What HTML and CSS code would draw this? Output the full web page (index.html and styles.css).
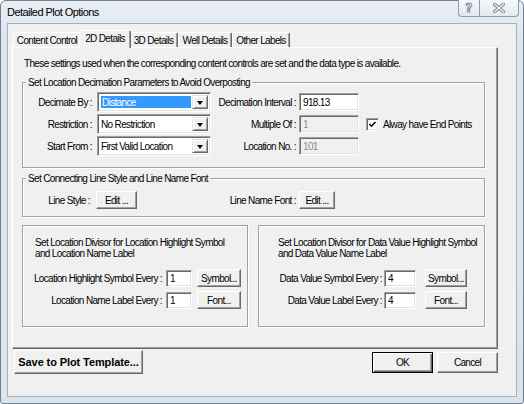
FILE: index.html
```html
<!DOCTYPE html>
<html>
<head>
<meta charset="utf-8">
<title>Detailed Plot Options</title>
<link rel="stylesheet" href="styles.css">
</head>
<body>
<div class="window">
  <div class="titlebar">
    <span class="title">Detailed Plot Options</span>
    <div class="caption-buttons">
      <span class="cap-btn help">?</span>
      <span class="cap-btn close">
        <svg width="12" height="10" viewBox="0 0 12 10"><path d="M1.5 1.2 L10.5 8.8 M10.5 1.2 L1.5 8.8" stroke="#7f8c9a" stroke-width="3.4" stroke-linecap="square"/><path d="M1.5 1.2 L10.5 8.8 M10.5 1.2 L1.5 8.8" stroke="#f3f5f8" stroke-width="1.3" stroke-linecap="square"/></svg>
      </span>
    </div>
  </div>
  <div class="client">
    <div class="tabstrip">
      <span class="tab t1">Content Control</span>
      <span class="tab t2 active">2D Details</span>
      <span class="tab t3">3D Details</span>
      <span class="tab t4">Well Details</span>
      <span class="tab t5">Other Labels</span>
    </div>
    <div class="panel">
      <p class="intro">These settings used when the corresponding content controls are set and the data type is available.</p>

      <fieldset class="group g1">
        <legend>Set Location Decimation Parameters to Avoid Overposting</legend>
        <div class="g1-grid">
          <span class="lbl l1">Decimate By :</span>
          <div class="combo focus"><span class="val"><span class="sel">Distance</span></span><span class="arrow"><i></i></span></div>
          <span class="lbl l3">Decimation Interval :</span>
          <div class="edit">918.13</div>
          <span></span>

          <span class="lbl l1">Restriction :</span>
          <div class="combo"><span class="val">No Restriction</span><span class="arrow"><i></i></span></div>
          <span class="lbl l3">Multiple Of :</span>
          <div class="edit disabled">1</div>
          <label class="check"><span class="box"><svg width="9" height="9" viewBox="0 0 9 9"><path d="M1.5 4 L3.5 6.2 L7.5 2" fill="none" stroke="#000" stroke-width="1.6"/></svg></span>Alway have End Points</label>

          <span class="lbl l1">Start From :</span>
          <div class="combo"><span class="val">First Valid Location</span><span class="arrow"><i></i></span></div>
          <span class="lbl l3">Location No. :</span>
          <div class="edit disabled">101</div>
          <span></span>
        </div>
      </fieldset>

      <fieldset class="group g2">
        <legend>Set Connecting Line Style and Line Name Font</legend>
        <div class="g2-grid">
          <span class="lbl c1">Line Style :</span>
          <button class="btn b-edit1">Edit ...</button>
          <span class="lbl c3">Line Name Font :</span>
          <button class="btn b-edit2">Edit ...</button>
        </div>
      </fieldset>

      <div class="divisors">
        <div class="box g3">
          <p class="note">Set Location Divisor for Location Highlight Symbol<br>and Location Name Label</p>
          <div class="g3-grid">
            <span class="lbl">Location Highlight Symbol Every :</span>
            <div class="edit small">1</div>
            <button class="btn small-btn">Symbol...</button>
            <span class="lbl">Location Name Label Every :</span>
            <div class="edit small">1</div>
            <button class="btn small-btn">Font...</button>
          </div>
        </div>
        <div class="box g4">
          <p class="note">Set Location Divisor for Data Value Highlight Symbol<br>and Data Value Name Label</p>
          <div class="g4-grid">
            <span class="lbl">Data Value Symbol Every :</span>
            <div class="edit small">4</div>
            <button class="btn small-btn">Symbol...</button>
            <span class="lbl">Data Value Label Every :</span>
            <div class="edit small">4</div>
            <button class="btn small-btn">Font...</button>
          </div>
        </div>
      </div>
    </div>

    <div class="bottom">
      <button class="btn save">Save to Plot Template...</button>
      <button class="btn ok">OK</button>
      <button class="btn cancel">Cancel</button>
    </div>
  </div>
</div>
</body>
</html>
```

FILE: styles.css
```css
* { box-sizing: border-box; }
html, body { margin: 0; padding: 0; }
body {
  width: 524px;
  height: 404px;
  overflow: hidden;
  background: #ffffff;
  font-family: "Liberation Sans", Arial, sans-serif;
  font-size: 10px;
  letter-spacing: -0.65px;
  color: #000;
}

.window {
  width: 524px;
  height: 404px;
  border: 1px solid #6f7f91;
  border-radius: 6px 6px 3px 3px;
  background: linear-gradient(#e9eef4, #dde5ed 40px, #dbe3eb);
  padding: 0 6px 6px 6px;
  display: flex;
  flex-direction: column;
}

.titlebar {
  height: 22px;
  flex: none;
  display: flex;
  align-items: center;
}
.title {
  font-size: 11px;
  letter-spacing: -0.55px;
  color: #000;
}
.caption-buttons {
  margin-left: auto;
  align-self: flex-start;
  margin-top: -1px;
  margin-right: -2px;
  height: 17px;
  display: flex;
  border: 1px solid #8d9bab;
  border-top: none;
  border-radius: 0 0 4px 4px;
  background: linear-gradient(#f5f8fa, #e3e9ef);
  overflow: hidden;
}
.cap-btn {
  display: flex;
  align-items: center;
  justify-content: center;
  height: 100%;
}
.help {
  width: 21px;
  border-right: 1px solid #8d9bab;
  font-family: "DejaVu Sans", sans-serif;
  font-weight: bold;
  font-size: 12px;
  letter-spacing: 0;
  color: #f2f5f8;
  -webkit-text-stroke: 1px #7f8c9a;
}
.close { width: 38px; }

.client {
  flex: 1;
  border: 1px solid #a3b0be;
  background: #f0f0f0;
  display: flex;
  flex-direction: column;
}

.tabstrip {
  height: 17px;
  margin-top: 6px;
  padding-left: 5px;
  display: flex;
  align-items: flex-end;
}
.tab {
  height: 15px;
  border-top: 1px solid #ffffff;
  border-left: 1px solid #ffffff;
  border-right: 1px solid #696969;
  border-radius: 2px 2px 0 0;
  box-shadow: inset -1px 0 #a0a0a0;
  display: flex;
  align-items: center;
  justify-content: center;
  white-space: nowrap;
  line-height: 13px;
}
.t1 { width: 68px; }
.t2 { width: 52px; }
.t3 { width: 49px; }
.t4 { width: 54px; }
.t5 { width: 58px; }
.tab.active {
  height: 18px;
  margin: 0 -2px -1px -2px;
  padding-bottom: 2px;
  background: #f0f0f0;
  position: relative;
  z-index: 2;
}

.panel {
  width: 486px;
  height: 302px;
  margin-left: 4px;
  border: 1px solid;
  border-color: #ffffff #696969 #696969 #ffffff;
  box-shadow: inset -1px -1px #a0a0a0;
  display: flex;
  flex-direction: column;
}
.intro {
  margin: 9px 0 0 11px;
  line-height: 13px;
  white-space: nowrap;
}

.group {
  margin: 0 0 0 9px;
  padding: 0;
  width: 463px;
  border: 1px solid #a0a0a0;
  box-shadow: inset 1px 1px #ffffff, 1px 1px #ffffff;
  min-width: 0;
}
.group legend {
  margin-left: 3px;
  padding: 0 2px;
  line-height: 13px;
  background: #f0f0f0;
  white-space: nowrap;
}
.g1 { margin-top: 6px; padding: 2px 0 10px 0; }
.g2 { margin-top: 4px; padding: 4px 0 5px 0; }

.lbl { white-space: nowrap; text-align: right; }

.g1-grid {
  display: grid;
  grid-template-columns: 74px 114px 88px 60px auto;
  grid-auto-rows: 22px;
  align-items: center;
}
.l1 { padding-right: 5px; }
.l3 { padding-right: 3px; }

.combo {
  height: 20px;
  border: 1px solid;
  border-color: #a0a0a0 #ffffff #ffffff #a0a0a0;
  box-shadow: inset 1px 1px #696969, inset -1px -1px #e3e3e3;
  background: #fff;
  display: flex;
  padding: 2px;
}
.combo .val {
  flex: 1;
  display: flex;
  align-items: center;
  padding-left: 1px;
  white-space: nowrap;
}
.combo.focus .val { padding: 1px; }
.combo.focus .sel {
  display: flex;
  align-items: center;
  width: 100%;
  height: 100%;
  background: #3399ff;
  color: #fff;
  padding-left: 1px;
}
.arrow {
  width: 16px;
  flex: none;
  background: #f0f0f0;
  border: 1px solid;
  border-color: #e3e3e3 #696969 #696969 #e3e3e3;
  box-shadow: inset 1px 1px #fff, inset -1px -1px #a0a0a0;
  display: flex;
  align-items: center;
  justify-content: center;
}
.arrow i {
  width: 0;
  height: 0;
  border-left: 3.5px solid transparent;
  border-right: 3.5px solid transparent;
  border-top: 4px solid #000;
  margin-top: 1px;
}

.edit {
  height: 18px;
  border: 1px solid;
  border-color: #a0a0a0 #ffffff #ffffff #a0a0a0;
  box-shadow: inset 1px 1px #696969, inset -1px -1px #e3e3e3;
  background: #fff;
  padding-left: 3px;
  display: flex;
  align-items: center;
  white-space: nowrap;
}
.edit.disabled { background: #f0f0f0; color: #8d8d8d; }

.check {
  display: flex;
  align-items: center;
  padding-left: 7px;
  white-space: nowrap;
}
.check .box {
  width: 13px;
  height: 13px;
  margin-right: 4px;
  border: 1px solid;
  border-color: #a0a0a0 #ffffff #ffffff #a0a0a0;
  box-shadow: inset 1px 1px #696969, inset -1px -1px #e3e3e3;
  background: #fff;
  display: flex;
  align-items: center;
  justify-content: center;
}

.btn {
  font: inherit;
  letter-spacing: inherit;
  color: #000;
  margin: 0;
  padding: 0;
  background: #f0f0f0;
  border: 1px solid;
  border-color: #ffffff #696969 #696969 #ffffff;
  box-shadow: inset -1px -1px #a0a0a0;
  white-space: nowrap;
}

.g2-grid {
  display: grid;
  grid-template-columns: 73px 41px 162px 36px;
  grid-auto-rows: 22px;
  align-items: center;
}
.c1 { padding-right: 6px; }
.c3 { padding-right: 3px; }
.b-edit1, .b-edit2 { height: 18px; }

.divisors {
  display: flex;
  gap: 10px;
  margin: 8px 0 0 9px;
}
.box {
  height: 102px;
  border: 1px solid #a0a0a0;
  box-shadow: inset 1px 1px #ffffff, 1px 1px #ffffff;
}
.g3 { width: 226px; }
.g4 { width: 227px; }
.note {
  margin: 11px 0 8px 0;
  line-height: 11px;
  white-space: nowrap;
}
.g3 .note { padding-left: 12px; }
.g4 .note { padding-left: 19px; }

.g3-grid, .g4-grid {
  display: grid;
  grid-auto-rows: 22px;
  align-items: center;
}
.g3-grid { grid-template-columns: 143px 26px 49px; }
.g4-grid { grid-template-columns: 125px 32px 51px; }
.g3-grid .lbl { padding-right: 4px; }
.g4-grid .lbl { padding-right: 2px; }
.edit.small { height: 17px; }
.small-btn { height: 18px; justify-self: end; }
.g3-grid .small-btn { width: 44px; }
.g4-grid .small-btn { width: 42px; }

.bottom {
  display: flex;
  align-items: flex-start;
  margin: 1px 18px 0 6px;
}
.save {
  width: 129px;
  height: 24px;
  font-weight: bold;
  font-size: 11px;
  letter-spacing: -0.1px;
}
.ok, .cancel {
  width: 61px;
  height: 21px;
  margin-top: 2px;
}
.ok {
  margin-left: auto;
  border: 1px solid #000;
  box-shadow: inset 1px 1px #fff, inset -1px -1px #696969, inset -2px -2px #a0a0a0;
}
.cancel { margin-left: 4px; }
```
